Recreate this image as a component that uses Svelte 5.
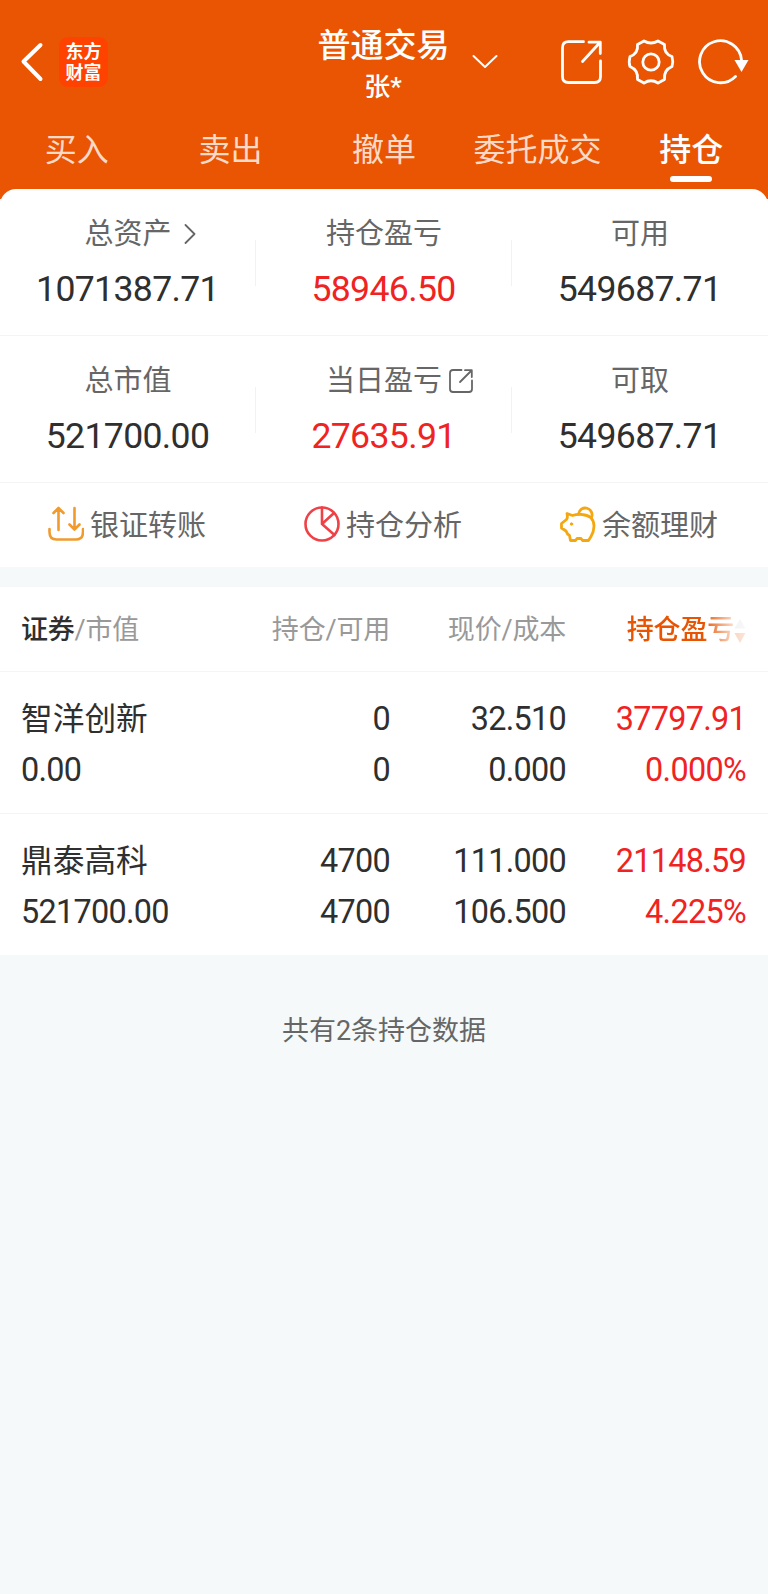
<script lang="ts">
	const tabs = ['买入', '卖出', '撤单', '委托成交', '持仓'];
	let active = $state('持仓');

	const stats = [
		[
			{ label: '总资产', value: '1071387.71', icon: 'arrow' },
			{ label: '持仓盈亏', value: '58946.50', up: true },
			{ label: '可用', value: '549687.71' }
		],
		[
			{ label: '总市值', value: '521700.00' },
			{ label: '当日盈亏', value: '27635.91', up: true, icon: 'share' },
			{ label: '可取', value: '549687.71' }
		]
	];

	const holdings = [
		{
			name: '智洋创新',
			market: '0.00',
			amount: '0',
			usable: '0',
			price: '32.510',
			cost: '0.000',
			profit: '37797.91',
			rate: '0.000%'
		},
		{
			name: '鼎泰高科',
			market: '521700.00',
			amount: '4700',
			usable: '4700',
			price: '111.000',
			cost: '106.500',
			profit: '21148.59',
			rate: '4.225%'
		}
	];
</script>

<div class="page">
	<header>
		<div class="bar">
			<div class="left">
				<svg class="back" width="24" height="40" viewBox="0 0 24 40">
					<path d="M20.500 3 3.500 19.500 20.500 37" />
				</svg>
				<div class="logo"><span>东方</span><span>财富</span></div>
			</div>
			<div class="title">
				<h1>普通交易</h1>
				<p>张*</p>
			</div>
			<div class="right">
				<svg class="down" width="26" height="16" viewBox="0 0 26 16">
					<path d="M1.500 2 13 13 24.500 2" />
				</svg>
				<svg width="44" height="48" viewBox="0 0 44 48">
					<path d="M22.500 3.700H7.500Q1.500 3.700 1.500 9.700V38.500Q1.500 44.500 7.500 44.500H33.500Q39.500 44.500 39.500 38.500V23" />
					<path d="M28 4.200H39.300V15.500M38.500 5 21.500 23.500" />
				</svg>
				<svg width="48" height="48" viewBox="0 0 48 48">
					<path
						d="M17 3Q24 7 31 3L37.500 6.500Q36.500 15.500 45 18.500Q46.500 24 45 28.500Q36.500 32 37.500 41.500L31 45Q24 40.500 17 45L10.500 41.500Q11.500 32 3 28.500Q1.500 24 3 18.500Q11.500 15.500 10.500 6.500Z"
					/>
					<circle cx="24" cy="24" r="8.200" />
				</svg>
				<svg width="52" height="48" viewBox="0 0 52 48">
					<path d="M44.500 22A21 21 0 1 0 38.500 38.500" />
					<path class="solid" d="M37.500 22H51.500L44.500 34Z" />
				</svg>
			</div>
		</div>
		<nav>
			{#each tabs as tab}
				<button class:active={tab === active} onclick={() => (active = tab)}>{tab}</button>
			{/each}
		</nav>
	</header>

	<section class="summary">
		{#each stats as row}
			<div class="stats">
				{#each row as item}
					<div class="stat">
						<div class="label">
							{item.label}
							{#if item.icon === 'arrow'}
								<svg class="arrow" width="12" height="20" viewBox="0 0 12 20">
									<path d="M1.500 1 10.500 10 1.500 19" />
								</svg>
							{:else if item.icon === 'share'}
								<svg class="share" width="24" height="24" viewBox="0 0 24 24">
									<path d="M12.500 1H4Q1 1 1 4V20Q1 23 4 23H20Q23 23 23 20V11.500" />
									<path d="M16 1.200H22.800V8M22.500 1.500 11 13" />
								</svg>
							{/if}
						</div>
						<div class="value" class:up={item.up}>{item.value}</div>
					</div>
				{/each}
			</div>
		{/each}

		<div class="actions">
			<div class="action">
				<svg width="36" height="36" viewBox="0 0 36 36" stroke="#f19a2e" stroke-width="2.600">
					<path d="M1.500 23V26Q1.500 33.500 8.500 33.500H28Q35 33.500 35 26V23" />
					<path d="M10.500 24V2M5.500 7 10.500 2 15.500 7M26.500 2V23M21.500 18.500 26.500 23.500 31.500 18.500" />
				</svg>
				银证转账
			</div>
			<div class="action">
				<svg width="36" height="36" viewBox="0 0 36 36" stroke="#ef4146" stroke-width="2.600">
					<circle cx="18" cy="18" r="16.500" />
					<path d="M18 1.500V18L30 7M18 18 30.500 29" />
				</svg>
				持仓分析
			</div>
			<div class="action">
				<svg width="36" height="36" viewBox="0 0 36 36" stroke="#f5a70f" stroke-width="2.800">
					<path
						d="M7 7.500 12.500 9.500Q17 8 22 8.500C30 9 34 13.500 34 20C34 24.500 32.500 28 31 30.500L28.500 34.500H22.500L21 32.500H17L15.500 34.500H10.500L9.500 29.500Q7 28 6 25L1.500 22V17.500L6.500 13.500Q8 11.500 7 7.500Z"
					/>
					<path d="M18.500 8A6.800 6.800 0 1 1 31.500 11.500" />
					<circle cx="11.500" cy="18" r="1.200" fill="#f5a70f" stroke-width="1" />
				</svg>
				余额理财
			</div>
		</div>
	</section>

	<section class="holdings">
		<div class="row head">
			<div><b>证券</b>/市值</div>
			<div>持仓/可用</div>
			<div>现价/成本</div>
			<div class="sort">
				持仓盈亏
				<svg width="12" height="26" viewBox="0 0 12 26">
					<path d="M6 1 11.500 10.500H.500Z" fill="#c9ced4" />
					<path d="M6 25 11.500 15H.500Z" fill="#e85401" />
				</svg>
			</div>
		</div>
		{#each holdings as item}
			<div class="row">
				<div><span class="name">{item.name}</span><span>{item.market}</span></div>
				<div><span>{item.amount}</span><span>{item.usable}</span></div>
				<div><span>{item.price}</span><span>{item.cost}</span></div>
				<div class="up"><span>{item.profit}</span><span>{item.rate}</span></div>
			</div>
		{/each}
	</section>

	<p class="total">共有{holdings.length}条持仓数据</p>
</div>

<style>
	:global(body) {
		background: #f5f9fa;
	}

	.page {
		width: 768px;
		min-height: 1594px;
		background: #f5f9fa;
		color: #2f2f2f;
		font-family: Roboto, 'Noto Sans CJK SC', sans-serif;
	}

	svg {
		display: block;
		flex: none;
		fill: none;
		stroke-linecap: round;
		stroke-linejoin: round;
	}

	header {
		height: 199px;
		background: #e95502;
		color: #fff;
	}

	.bar {
		display: grid;
		grid-template-columns: 1fr auto 1fr;
		height: 124px;
	}

	.bar svg {
		stroke: #fff;
		stroke-width: 2.8;
	}

	.left {
		display: flex;
		align-items: center;
		gap: 15px;
		padding-left: 20px;
	}

	.bar .back {
		stroke-width: 4;
	}

	.logo {
		display: flex;
		flex-direction: column;
		justify-content: center;
		align-items: center;
		width: 49px;
		height: 50px;
		border-radius: 9px;
		background: #ff4200;
		font-size: 18px;
		font-weight: 700;
		line-height: 21px;
	}

	.title {
		padding-top: 25px;
		text-align: center;
	}

	h1 {
		margin: 0;
		padding-right: 1px;
		font-size: 33px;
		font-weight: 500;
		line-height: 42px;
	}

	.title p {
		margin: 0;
		padding-right: 2px;
		font-size: 26px;
		font-weight: 500;
		line-height: 40px;
	}

	.right {
		display: flex;
		align-items: center;
		justify-content: flex-end;
		gap: 22px;
		padding-right: 19px;
	}

	.bar .down {
		margin-right: auto;
		margin-left: 21px;
		stroke-width: 2;
	}

	.bar .solid {
		fill: #fff;
		stroke: none;
	}

	nav {
		display: grid;
		grid-template-columns: repeat(5, 1fr);
	}

	button {
		display: flex;
		flex-direction: column;
		align-items: center;
		padding: 0;
		border: 0;
		background: none;
		color: #fddac8;
		font: inherit;
		font-size: 32px;
		line-height: 52px;
		white-space: nowrap;
	}

	.active {
		color: #fff;
		font-weight: 500;
	}

	.active::after {
		content: '';
		width: 42px;
		height: 6px;
		border-radius: 3px;
		background: #fff;
	}

	.summary {
		height: 378px;
		margin-top: -10px;
		border-radius: 16px 16px 0 0;
		background: #fff;
	}

	.stats {
		display: grid;
		grid-template-columns: repeat(3, 1fr);
		height: 147px;
		box-sizing: border-box;
		border-bottom: 1px solid #f4f4f4;
	}

	.stat {
		padding-top: 25px;
		background: linear-gradient(#f2f2f2, #f2f2f2) no-repeat right 51px / 1px 46px;
		text-align: center;
	}

	.stat:last-child {
		background: none;
	}

	.label {
		display: flex;
		align-items: center;
		justify-content: center;
		color: #666;
		font-size: 29px;
		line-height: 40px;
	}

	/* icons hang outside so the label itself stays centred */
	.label svg {
		stroke: #666;
		stroke-width: 1.8;
	}

	.arrow {
		margin: 0 -24px 0 12px;
	}

	.share {
		margin: 0 -31px 0 7px;
	}

	.value {
		padding: 14px 1px 0 0;
		font-size: 35.6px;
		letter-spacing: -0.65px;
		line-height: 42px;
	}

	.up,
	.value.up {
		color: #f02323;
	}

	.actions {
		display: grid;
		grid-template-columns: repeat(3, 1fr);
		height: 80px;
	}

	.action {
		display: flex;
		align-items: center;
		justify-content: center;
		gap: 6px;
		padding-right: 1px;
		color: #666;
		font-size: 29px;
	}

	.action svg {
		margin: 2px 0 0 -1px;
	}

	.holdings {
		margin-top: 20px;
		background: #fff;
	}

	.row {
		display: grid;
		grid-template-columns: 201px 168px 176px 180px;
		height: 142px;
		box-sizing: border-box;
		padding: 22px 21px 0;
		border-top: 1px solid #f5f5f5;
		font-size: 32.4px;
		letter-spacing: -0.7px;
		line-height: 51px;
	}

	.row > div {
		text-align: right;
	}

	.row > div:first-child {
		text-align: left;
	}

	.row span {
		display: block;
	}

	.row .name {
		font-size: 31.7px;
		letter-spacing: 0;
	}

	.head {
		height: 84px;
		padding-top: 18px;
		border: 0;
		color: #999;
		font-size: 27px;
		letter-spacing: -0.2px;
	}

	b {
		color: #2f2f2f;
		font-weight: 500;
	}

	.sort {
		display: flex;
		align-items: center;
		align-self: start;
		justify-content: flex-end;
		color: #e85401;
		font-weight: 500;
		mask-image: linear-gradient(to right, #000 76%, rgb(0 0 0 / 0.25) 92%, rgb(0 0 0 / 0.15));
	}

	.total {
		margin: 0;
		padding-top: 56px;
		color: #666;
		font-size: 27px;
		line-height: 40px;
		text-align: center;
	}
</style>
